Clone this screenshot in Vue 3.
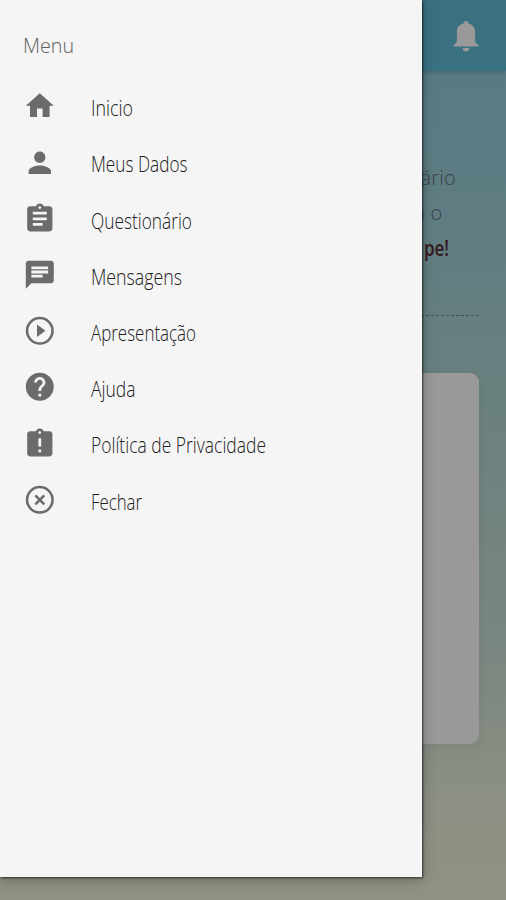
<script setup>
const items = [
  { label: 'Inicio', width: 42, d: 'M10 20v-6h4v6h5v-8h3L12 3 2 12h3v8z' },
  { label: 'Meus Dados', width: 96.5, d: 'M12 12c2.21 0 4-1.79 4-4s-1.79-4-4-4-4 1.79-4 4 1.79 4 4 4zm0 2c-2.67 0-8 1.34-8 4v2h16v-2c0-2.66-5.33-4-8-4z' },
  { label: 'Questionário', width: 101, d: 'M19 3h-4.18C14.4 1.84 13.3 1 12 1c-1.3 0-2.4.84-2.82 2H5c-1.1 0-2 .9-2 2v14c0 1.1.9 2 2 2h14c1.1 0 2-.9 2-2V5c0-1.1-.9-2-2-2zm-7 0c.55 0 1 .45 1 1s-.45 1-1 1-1-.45-1-1 .45-1 1-1zm2 14H7v-2h7v2zm3-4H7v-2h10v2zm0-4H7V7h10v2z' },
  { label: 'Mensagens', width: 91, d: 'M20 2H4c-1.1 0-1.99.9-1.99 2L2 22l4-4h14c1.1 0 2-.9 2-2V4c0-1.1-.9-2-2-2zM6 9h12v2H6V9zm8 5H6v-2h8v2zm4-6H6V6h12v2z' },
  { label: 'Apresentação', width: 105, d: 'M10 16.5l6-4.5-6-4.5v9z', ring: true },
  { label: 'Ajuda', width: 44.5, d: 'M12 2C6.48 2 2 6.48 2 12s4.48 10 10 10 10-4.48 10-10S17.52 2 12 2zm1 17h-2v-2h2v2zm2.07-7.75l-.9.92C13.45 12.9 13 13.5 13 15h-2v-.5c0-1.1.45-2.1 1.17-2.83l1.24-1.26c.37-.36.59-.86.59-1.41 0-1.1-.9-2-2-2s-2 .9-2 2H8c0-2.21 1.79-4 4-4s4 1.79 4 4c0 .88-.36 1.68-.93 2.25z' },
  { label: 'Política de Privacidade', width: 175, d: 'M19 3h-4.18C14.4 1.84 13.3 1 12 1c-1.3 0-2.4.84-2.82 2H5c-1.1 0-2 .9-2 2v14c0 1.1.9 2 2 2h14c1.1 0 2-.9 2-2V5c0-1.1-.9-2-2-2zm-6 15h-2v-2h2v2zm0-4h-2V8h2v6zm-1-9c-.55 0-1-.45-1-1s.45-1 1-1 1 .45 1 1-.45 1-1 1z' },
  { label: 'Fechar', width: 51, stroke: 'M8.8 8.8l6.4 6.4M15.2 8.8l-6.4 6.4', ring: true }
]
</script>

<template>
  <div class="screen">
    <header class="topbar">
      <svg class="bell" viewBox="0 0 26 31">
        <path d="M13 0c1.5 0 2.3 1 2.5 2.6 4.2 1 6.6 4 6.6 8.4v8.5c0 2 1.2 3.2 3.4 4.600v1.400H.5v-1.400c2.200-1.400 3.400-2.600 3.400-4.600V11c0-4.400 2.400-7.400 6.600-8.400C10.700 1 11.500 0 13 0zM9.500 27h7c-.3 2.200-1.700 3.500-3.500 3.500S9.800 29.200 9.500 27z" />
      </svg>
    </header>
    <main class="page">
      <div class="intro">
        <p class="line first">ário</p>
        <p class="line second">m o</p>
        <svg class="strong" width="60" height="35">
          <text x="0" y="25.5" textLength="25" lengthAdjust="spacingAndGlyphs">pe!</text>
        </svg>
      </div>
      <div class="divider"></div>
      <section class="card"></section>
    </main>
    <nav class="drawer">
      <h1 class="title">
        <svg width="80" height="30">
          <text x="0" y="22" textLength="51" lengthAdjust="spacingAndGlyphs">Menu</text>
        </svg>
      </h1>
      <ul class="list">
        <li v-for="item in items" :key="item.label" class="item">
          <svg class="icon" viewBox="0 0 24 24">
            <circle v-if="item.ring" class="outline" cx="12" cy="12" r="9.1" />
            <path v-if="item.d" :d="item.d" />
            <path v-if="item.stroke" class="outline" :d="item.stroke" />
          </svg>
          <svg class="label" width="220" height="40">
            <text x="0" y="30" :textLength="item.width" lengthAdjust="spacingAndGlyphs">{{ item.label }}</text>
          </svg>
        </li>
      </ul>
    </nav>
  </div>
</template>

<style>
body { margin: 0; }
</style>

<style scoped>
.screen {
  position: relative;
  width: 506px;
  height: 900px;
  overflow: hidden;
  font-family: "Open Sans", "Noto Sans", sans-serif;
  background: linear-gradient(180deg, #577983 0, #5a7b83 130px, #69807f 380px, #7b8780 660px, #8c9084 800px, #909181 900px);
}
.topbar {
  box-sizing: border-box;
  height: 71px;
  padding: 21px 27px 0 0;
  display: flex;
  justify-content: flex-end;
  align-items: flex-start;
  background: #397181;
  box-shadow: 0 1px 5px rgba(0, 0, 0, 0.18);
}
.bell { width: 26px; height: 31px; fill: #999; }
.page { padding-right: 27px; }
.intro {
  height: 244px;
  box-sizing: border-box;
  padding-top: 89px;
  margin-left: 400px;
  font-size: 20px;
  line-height: 35px;
  color: #39404b;
}
.line { margin: 0; font-weight: 300; white-space: nowrap; }
.first { padding-left: 20.5px; letter-spacing: 0.2px; }
.second { padding-left: 7px; letter-spacing: 0.3px; }
.strong { display: block; margin-left: 24px; }
.strong text { font-size: 21px; font-weight: 600; fill: #35171c; }
.divider { height: 1px; border-top: 1px dashed #3f5056; }
.card {
  height: 371px;
  margin-top: 56px;
  border-radius: 0 9px 9px 0;
  background: #999;
  box-shadow: 0 3px 12px rgba(0, 0, 0, 0.06);
}
.drawer {
  position: absolute;
  left: 0;
  top: 0;
  width: 422px;
  height: 877px;
  background: #f5f5f5;
  box-shadow: 1px 1px 2px rgba(0, 0, 0, 0.6), 0 2px 12px rgba(0, 0, 0, 0.28);
}
.title {
  box-sizing: border-box;
  margin: 0;
  padding: 31px 0 0 23px;
  height: 78.2px;
  line-height: 0;
}
.title text { font-size: 20px; font-weight: 300; fill: #606060; }
.list { margin: 0; padding: 0; list-style: none; }
.item {
  height: 56.2px;
  padding-left: 23.2px;
  display: flex;
  align-items: center;
}
.icon { width: 33.6px; height: 33.6px; fill: #6b6b6b; flex: none; }
.outline { fill: none; stroke: #6b6b6b; stroke-width: 1.8; }
.label { margin-left: 34.2px; overflow: visible; }
.label text { font-size: 22px; font-weight: 300; fill: #202020; }
</style>
